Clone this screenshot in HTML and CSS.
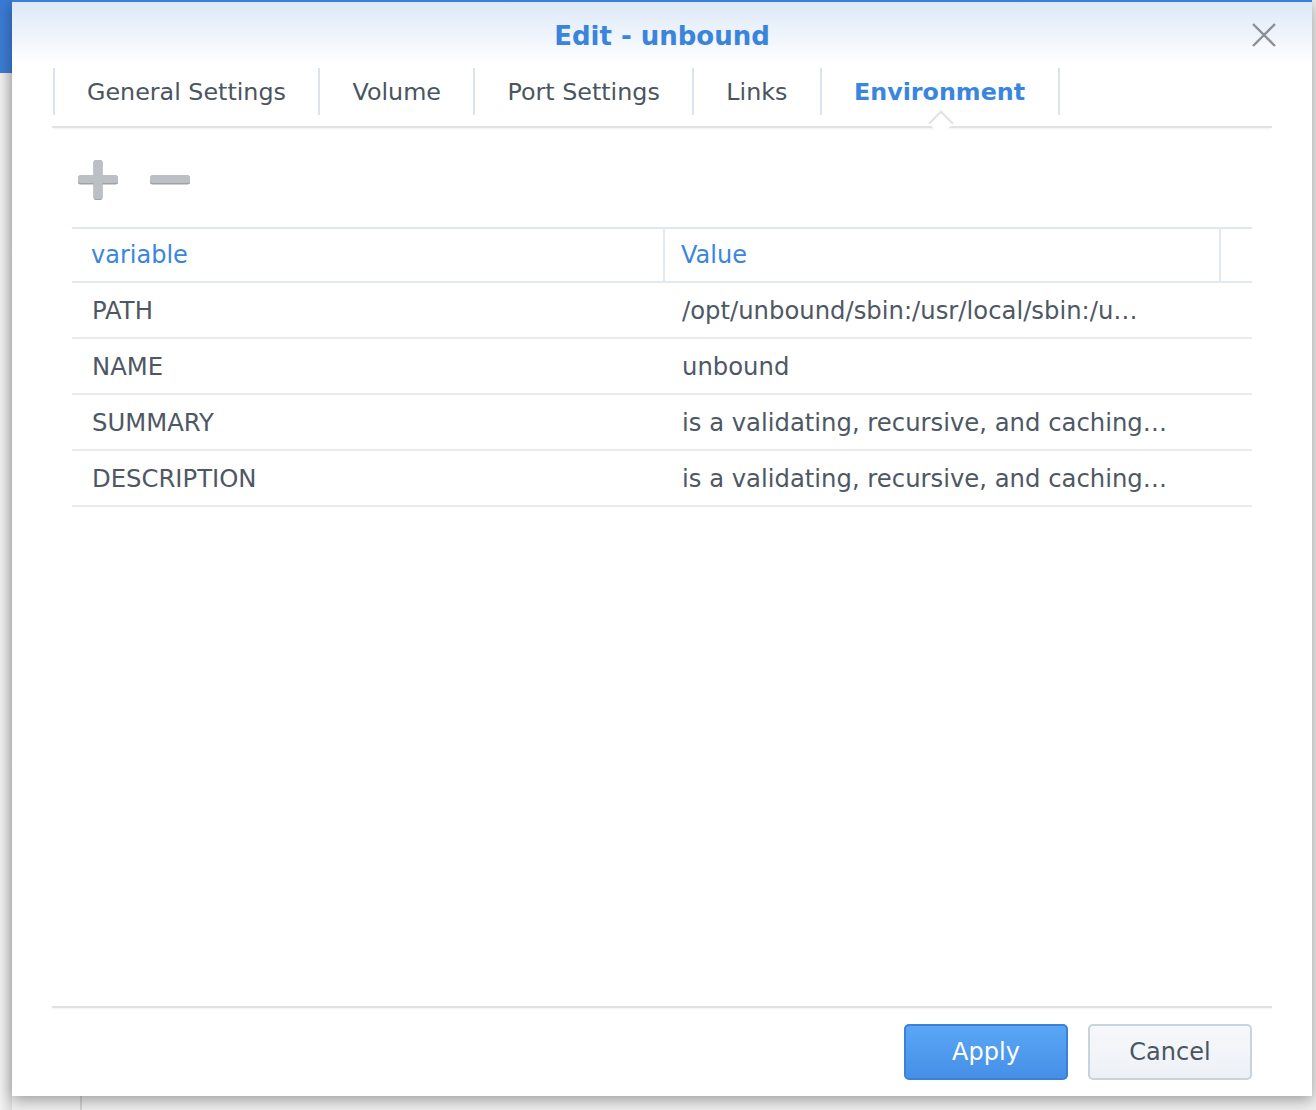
FILE: index.html
```html
<!DOCTYPE html>
<html>
<head>
<meta charset="utf-8">
<link rel="stylesheet" href="styles.css">
</head>
<body>
<div class="desktop">
  <div class="dialog">
    <div class="header">
      <div class="title">Edit - unbound</div>
      <button class="close" aria-label="Close">
        <svg width="26" height="26" viewBox="0 0 26 26"><path d="M2 2 L24 24 M24 2 L2 24" stroke="#8c8f94" stroke-width="2.4" fill="none"/></svg>
      </button>
    </div>
    <div class="tabs">
      <div class="tab">General Settings</div>
      <div class="tab">Volume</div>
      <div class="tab">Port Settings</div>
      <div class="tab">Links</div>
      <div class="tab active">Environment<span class="notch"></span></div>
    </div>
    <div class="content">
      <div class="toolbar">
        <svg class="tool" width="40" height="40" viewBox="0 0 40 40">
          <rect x="0" y="15.5" width="40" height="9" rx="2.5" fill="#9fa2a7"/>
          <rect x="15.5" y="0" width="9" height="40" rx="2.5" fill="#9fa2a7"/>
          <rect x="0" y="15" width="40" height="8" rx="2.5" fill="#bcbfc4"/>
          <rect x="15.5" y="0" width="9" height="39" rx="2.5" fill="#bcbfc4"/>
        </svg>
        <svg class="tool" width="40" height="40" viewBox="0 0 40 40">
          <rect x="0" y="15.5" width="40" height="9" rx="2.5" fill="#9fa2a7"/>
          <rect x="0" y="15" width="40" height="8" rx="2.5" fill="#bcbfc4"/>
        </svg>
      </div>
      <div class="grid">
        <div class="row head">
          <div class="cell c1">variable</div>
          <div class="cell c2">Value</div>
          <div class="cell c3"></div>
        </div>
        <div class="row">
          <div class="cell c1">PATH</div>
          <div class="cell c2">/opt/unbound/sbin:/usr/local/sbin:/u…</div>
          <div class="cell c3"></div>
        </div>
        <div class="row">
          <div class="cell c1">NAME</div>
          <div class="cell c2">unbound</div>
          <div class="cell c3"></div>
        </div>
        <div class="row">
          <div class="cell c1">SUMMARY</div>
          <div class="cell c2">is a validating, recursive, and caching…</div>
          <div class="cell c3"></div>
        </div>
        <div class="row">
          <div class="cell c1">DESCRIPTION</div>
          <div class="cell c2">is a validating, recursive, and caching…</div>
          <div class="cell c3"></div>
        </div>
      </div>
    </div>
    <div class="footer">
      <button class="btn primary">Apply</button>
      <button class="btn">Cancel</button>
    </div>
  </div>
</div>
</body>
</html>
```

FILE: styles.css
```css
html, body {
  margin: 0;
  padding: 0;
}
body {
  width: 1316px;
  height: 1110px;
  overflow: hidden;
  font-family: "DejaVu Sans", sans-serif;
}
.desktop {
  width: 1316px;
  height: 1110px;
  box-sizing: border-box;
  padding-left: 12px;
  background:
    linear-gradient(#3a7bd3, #3a7bd3) 0 0 / 12px 73px no-repeat,
    linear-gradient(#d2d2d2, #d2d2d2) 80px 1096px / 2px 14px no-repeat,
    linear-gradient(90deg, #f2f2f2, #dcdcdc) 0 0 / 12px 100% no-repeat,
    #efefef;
}
.dialog {
  width: 1300px;
  height: 1096px;
  box-sizing: border-box;
  border-top: 2px solid #3b80d6;
  background: #fff;
  box-shadow: 0 4px 14px rgba(0, 0, 0, 0.35);
  display: flex;
  flex-direction: column;
}
.header {
  position: relative;
  height: 66px;
  flex: none;
  background: linear-gradient(#dce8f7, #ffffff 62px);
  display: flex;
  align-items: center;
  justify-content: center;
}
.title {
  font-weight: bold;
  font-size: 26px;
  color: #3a84dc;
  margin-top: 1px;
}
.close {
  position: absolute;
  right: 35px;
  top: 20px;
  width: 26px;
  height: 26px;
  padding: 0;
  border: 0;
  background: none;
}
.close svg { display: block; }
.tabs {
  flex: none;
  margin: 0 40px;
  height: 60px;
  box-sizing: border-box;
  border-bottom: 2px solid #e2e2e2;
  box-shadow: 0 2px 2px -1px rgba(0,0,0,0.06);
  display: flex;
  align-items: flex-start;
}
.tab {
  position: relative;
  height: 47px;
  padding: 0 32.5px 0 32px;
  border-left: 2px solid #dbe3ec;
  display: flex;
  align-items: center;
  font-size: 23.8px;
  color: #4b5560;
  white-space: nowrap;
}
.tab:first-child { margin-left: 1px; }
.tab.active {
  color: #3a86de;
  font-weight: bold;
  border-right: 2px solid #dbe3ec;
}
.notch {
  position: absolute;
  left: 50%;
  bottom: -17px;
  width: 16px;
  height: 16px;
  margin-left: -8px;
  background: #fff;
  border-left: 2px solid #e2e2e2;
  border-top: 2px solid #e2e2e2;
  transform: rotate(45deg);
}
.content {
  flex: 1;
  padding: 32px 60px 0 60px;
}
.toolbar {
  display: flex;
  gap: 32px;
  padding-left: 6px;
  height: 40px;
}
.tool { display: block; }
.grid {
  margin-top: 27px;
  border-top: 2px solid #dfe7f0;
}
.row {
  display: flex;
  height: 56px;
  box-sizing: border-box;
  border-bottom: 2px solid #e8ecf0;
  font-size: 24.3px;
  color: #4e5864;
}
.row.head {
  height: 54px;
  border-bottom-color: #e2e9f1;
  color: #3a86de;
  font-size: 24px;
}
.cell {
  display: flex;
  align-items: center;
  box-sizing: border-box;
  white-space: nowrap;
  overflow: hidden;
}
.c1 { width: 591px; padding-left: 20px; }
.c2 { width: 556px; padding-left: 19px; }
.c3 { flex: 1; }
.head .c1 { padding-left: 19px; }
.head .c2 { border-left: 2px solid #e2e9f1; padding-left: 16px; }
.head .c3 { border-left: 2px solid #e2e9f1; }
.footer {
  flex: none;
  margin: 0 40px;
  border-top: 2px solid #e0e0e0;
  box-shadow: inset 0 2px 2px -1px rgba(0,0,0,0.05);
  padding: 16px 20px 16px 0;
  display: flex;
  justify-content: flex-end;
  gap: 20px;
}
.btn {
  width: 164px;
  height: 56px;
  box-sizing: border-box;
  border: 2px solid #cad2dc;
  border-radius: 5px;
  background: linear-gradient(#f6f8fb, #edf1f6);
  font-family: "DejaVu Sans", sans-serif;
  font-size: 24px;
  color: #4b5560;
  padding: 0;
}
.btn.primary {
  border-color: #3c81d6;
  background: linear-gradient(#5aa6f6, #4590e5);
  color: #ffffff;
}
```
